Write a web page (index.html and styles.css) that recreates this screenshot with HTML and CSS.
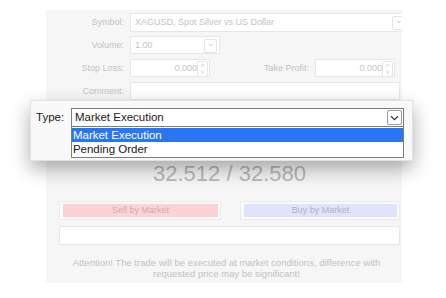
FILE: index.html
```html
<!DOCTYPE html>
<html lang="en">
<head>
    <meta charset="utf-8">
    <title>New Order</title>
    <link rel="stylesheet" href="styles.css">
</head>
<body>
    <div class="stage">
        <div class="dialog">
            <div class="row">
                <span class="lbl">Symbol:</span>
                <div class="field field-symbol">XAGUSD, Spot Silver vs US Dollar<span class="drop">&#8964;</span></div>
            </div>
            <div class="row">
                <span class="lbl">Volume:</span>
                <div class="field field-volume">1.00<span class="drop">&#8964;</span></div>
            </div>
            <div class="row row-stops">
                <span class="lbl">Stop Loss:</span>
                <div class="field field-num"><span class="val">0.000</span><span class="spin"><i>&#708;</i><i>&#709;</i></span></div>
                <span class="lbl lbl-tp">Take Profit:</span>
                <div class="field field-num"><span class="val">0.000</span><span class="spin"><i>&#708;</i><i>&#709;</i></span></div>
            </div>
            <div class="row">
                <span class="lbl">Comment:</span>
                <div class="field field-comment"></div>
            </div>

            <div class="lower">
                <div class="price">32.512 / 32.580</div>
                <div class="buttons">
                    <div class="btn-wrap"><div class="btn btn-sell">Sell by Market</div></div>
                    <div class="btn-wrap"><div class="btn btn-buy">Buy by Market</div></div>
                </div>
                <div class="status"></div>
                <p class="note">Attention! The trade will be executed at market conditions, difference with<br>requested price may be significant!</p>
            </div>
        </div>

        <div class="popup">
            <div class="type-row">
                <span class="type-lbl">Type:</span>
                <div class="type-box">
                    <div class="select">Market Execution
                        <span class="select-btn">
                            <svg width="9" height="6" viewBox="0 0 9 6"><path d="M1 1.2 L4.5 4.6 L8 1.2" fill="none" stroke="#333" stroke-width="1.2"/></svg>
                        </span>
                    </div>
                    <ul class="options">
                        <li class="active">Market Execution</li>
                        <li>Pending Order</li>
                    </ul>
                </div>
            </div>
        </div>
    </div>
</body>
</html>
```

FILE: styles.css
```css
html,
body {
    margin: 0;
    background-color: #ffffff;
    font-family: "Liberation Sans", Arial, sans-serif;
}

.stage {
    position: relative;
    width: 446px;
    height: 298px;
    overflow: hidden;
}

/* faded order window behind the popup */
.dialog {
    margin: 10px 0 0 46px;
    width: 356px;
    height: 273px;
    padding-top: 3px;
    box-sizing: border-box;
    background-color: #f6f6f6;
    overflow: hidden;
    font-size: 9px;
    color: #c3c3c3;
}

.row {
    display: flex;
    align-items: center;
    height: 18px;
    margin-bottom: 5px;
}
.lbl {
    width: 78px;
    margin-right: 6px;
    text-align: right;
    flex-shrink: 0;
}
.lbl-tp {
    width: 99px;
}

.field {
    position: relative;
    height: 18px;
    box-sizing: border-box;
    border: 1px solid #e7e7e7;
    background-color: #ffffff;
    display: flex;
    align-items: center;
    padding: 0 4px;
    flex-shrink: 0;
}
.field-symbol {
    width: 290px;
    height: 19px;
}
.field-volume {
    width: 90px;
}
.field-num {
    width: 80px;
    justify-content: flex-end;
    padding-right: 12px;
}
.field-comment {
    width: 270px;
}
.drop {
    position: absolute;
    top: 2px;
    width: 11px;
    height: 12px;
    border: 1px solid #e4e4e4;
    border-radius: 2px;
    line-height: 6px;
    text-align: center;
    font-size: 9px;
    color: #cfcfcf;
}
.field-symbol .drop {
    left: 261px;
}
.field-volume .drop {
    right: 2px;
}
.spin {
    position: absolute;
    right: 1px;
    top: 1px;
    width: 9px;
    height: 14px;
    border: 1px solid #e6e6e6;
    border-radius: 2px;
    display: flex;
    flex-direction: column;
    align-items: center;
    font-size: 7px;
    line-height: 7px;
    color: #d0d0d0;
}
.spin i {
    font-style: normal;
}

.lower {
    margin: 63px 0 0 13px;
    width: 341px;
}
.price {
    height: 38px;
    text-align: center;
    font-size: 22px;
    line-height: 22px;
    color: #b8b8b8;
}
.buttons {
    display: grid;
    grid-template-columns: 162px 160px;
    column-gap: 19px;
}
.btn-wrap {
    height: 19px;
    box-sizing: border-box;
    border: 1px solid #ebebeb;
    border-radius: 2px;
    background-color: #fafafa;
    padding: 2px 2px 2px 3px;
}
.btn {
    height: 13px;
    line-height: 13px;
    text-align: center;
}
.btn-sell {
    background-color: #fdd2d6;
    color: #d4aaae;
}
.btn-buy {
    background-color: #dfe3fb;
    color: #aeb2c8;
}
.status {
    margin-top: 6px;
    height: 19px;
    box-sizing: border-box;
    border: 1px solid #e8e8e8;
    border-radius: 2px;
    background-color: #ffffff;
}
.note {
    margin: 12px 0 0;
    padding-right: 6px;
    text-align: center;
    font-size: 9.5px;
    line-height: 11px;
    color: #c2c2c2;
}

/* order type popup on top */
.popup {
    position: absolute;
    left: 30px;
    top: 100px;
    width: 383px;
    height: 61px;
    box-sizing: border-box;
    padding: 7px 8px 0 5px;
    background-color: #f9f9f9;
    border: 1px solid #e2e2e2;
    box-shadow: 0 8px 18px rgba(0, 0, 0, 0.32);
    font-size: 11.5px;
    color: #1a1a1a;
}
.type-row {
    display: flex;
}
.type-lbl {
    width: 35px;
    line-height: 19px;
}
.type-box {
    width: 334px;
}
.select {
    position: relative;
    height: 19px;
    box-sizing: border-box;
    border: 1px solid #7c7c7c;
    background-color: #ffffff;
    padding-left: 3px;
    line-height: 17px;
}
.select-btn {
    position: absolute;
    right: 1px;
    top: 1px;
    width: 15px;
    height: 15px;
    box-sizing: border-box;
    border: 1px solid #9a9a9a;
    border-radius: 2px;
    display: flex;
    align-items: center;
    justify-content: center;
}
.options {
    list-style-type: none;
    margin: 0;
    padding: 1px 0;
    border: 1px solid #7c7c7c;
    border-top: 0;
    background-color: #ffffff;
}
.options li {
    height: 14px;
    line-height: 14px;
    padding-left: 1px;
}
.options li.active {
    background-color: #2a75f3;
    color: #ffffff;
}
```
